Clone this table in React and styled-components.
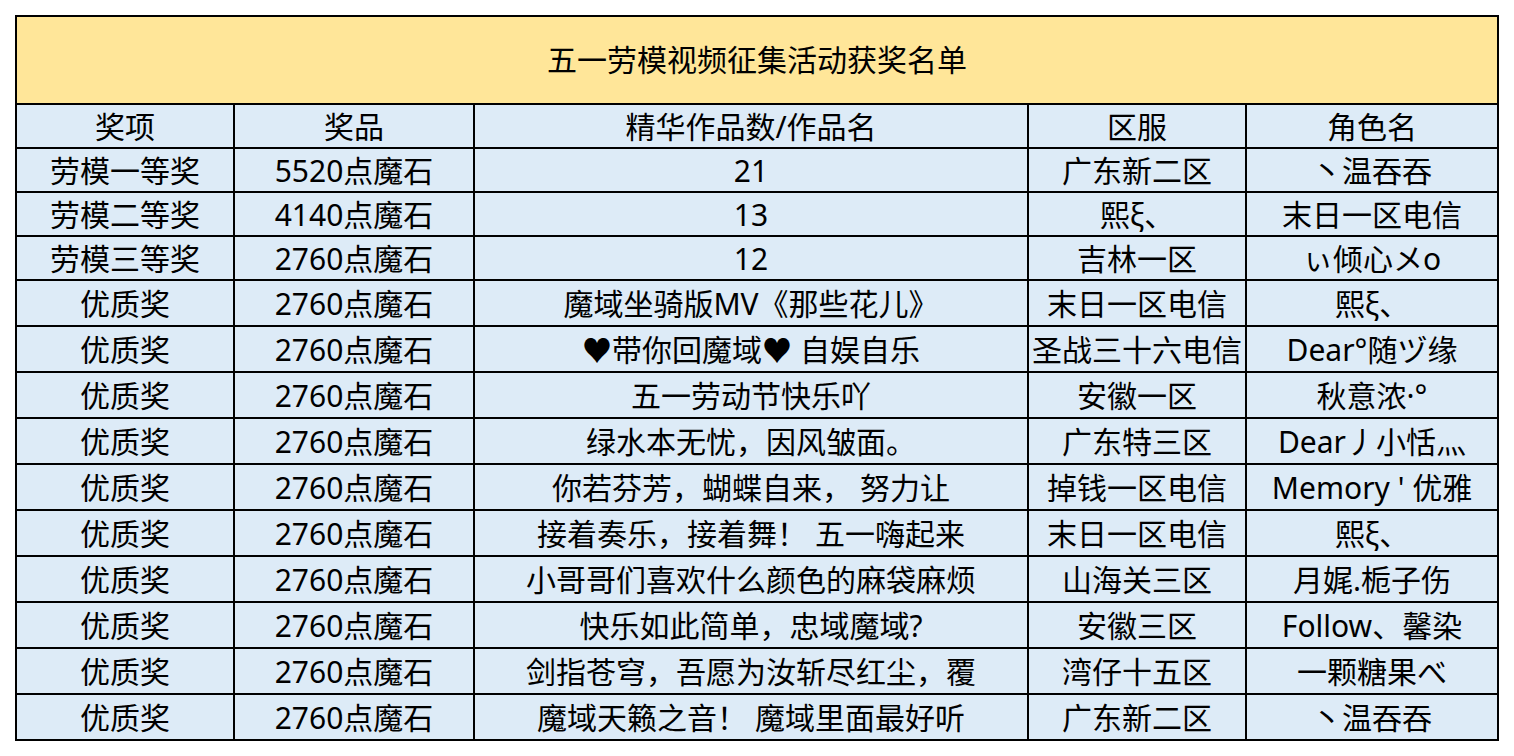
import React from "react";
import styled, { createGlobalStyle } from "styled-components";

const GlobalStyle = createGlobalStyle`
  html, body {
    margin: 0;
    padding: 0;
    background: #ffffff;
  }
  body {
    padding: 15px;
    font-family: "Noto Sans", "Noto Sans CJK SC", "DejaVu Sans", sans-serif;
    color: #000000;
  }
`;

const columns = [218, 240, 554, 218, 252];

const Sheet = styled.div`
  display: grid;
  grid-template-columns: ${columns.map((w) => `${w}px`).join(" ")};
  grid-auto-rows: auto;
  width: max-content;
  border-left: 2px solid #000;
  border-top: 2px solid #000;
  box-sizing: border-box;
`;

const Cell = styled.div`
  box-sizing: border-box;
  height: ${(p) => p.$height || 46}px;
  border-right: 2px solid #000;
  border-bottom: 2px solid #000;
  background: #ddebf7;
  display: flex;
  align-items: center;
  justify-content: center;
  font-size: 30px;
  line-height: 1;
  white-space: nowrap;
  overflow: hidden;
  padding-top: 2px;
`;

const TitleCell = styled(Cell)`
  grid-column: 1 / -1;
  background: #ffe699;
  padding-top: 0;
`;

const headers = ["奖项", "奖品", "精华作品数/作品名", "区服", "角色名"];

const rows = [
  ["劳模一等奖", "5520点魔石", "21", "广东新二区", "丶温吞吞"],
  ["劳模二等奖", "4140点魔石", "13", "熙ξ、", "末日一区电信"],
  ["劳模三等奖", "2760点魔石", "12", "吉林一区", "ぃ倾心メo"],
  ["优质奖", "2760点魔石", "魔域坐骑版MV《那些花儿》", "末日一区电信", "熙ξ、"],
  ["优质奖", "2760点魔石", "♥带你回魔域♥  自娱自乐", "圣战三十六电信", "Dear°随ヅ缘"],
  ["优质奖", "2760点魔石", "五一劳动节快乐吖", "安徽一区", "秋意浓·°"],
  ["优质奖", "2760点魔石", "绿水本无忧，因风皱面。", "广东特三区", "Dear丿小恬灬"],
  ["优质奖", "2760点魔石", "你若芬芳，蝴蝶自来，  努力让", "掉钱一区电信", "Memory ' 优雅"],
  ["优质奖", "2760点魔石", "接着奏乐，接着舞！ 五一嗨起来", "末日一区电信", "熙ξ、"],
  ["优质奖", "2760点魔石", "小哥哥们喜欢什么颜色的麻袋麻烦", "山海关三区", "月娓.栀子伤"],
  ["优质奖", "2760点魔石", "快乐如此简单，忠域魔域?", "安徽三区", "Follow、馨染"],
  ["优质奖", "2760点魔石", "剑指苍穹，吾愿为汝斩尽红尘，覆", "湾仔十五区", "一颗糖果べ"],
  ["优质奖", "2760点魔石", "魔域天籁之音！ 魔域里面最好听", "广东新二区", "丶温吞吞"],
];

export default function App() {
  return (
    <>
      <GlobalStyle />
      <Sheet>
        <TitleCell $height={88}>五一劳模视频征集活动获奖名单</TitleCell>
        {headers.map((h) => (
          <Cell key={h} $height={44}>
            {h}
          </Cell>
        ))}
        {rows.map((row, i) =>
          row.map((text, j) => (
            <Cell key={`${i}-${j}`} $height={i < 3 ? 44 : 46}>
              {text}
            </Cell>
          ))
        )}
      </Sheet>
    </>
  );
}
